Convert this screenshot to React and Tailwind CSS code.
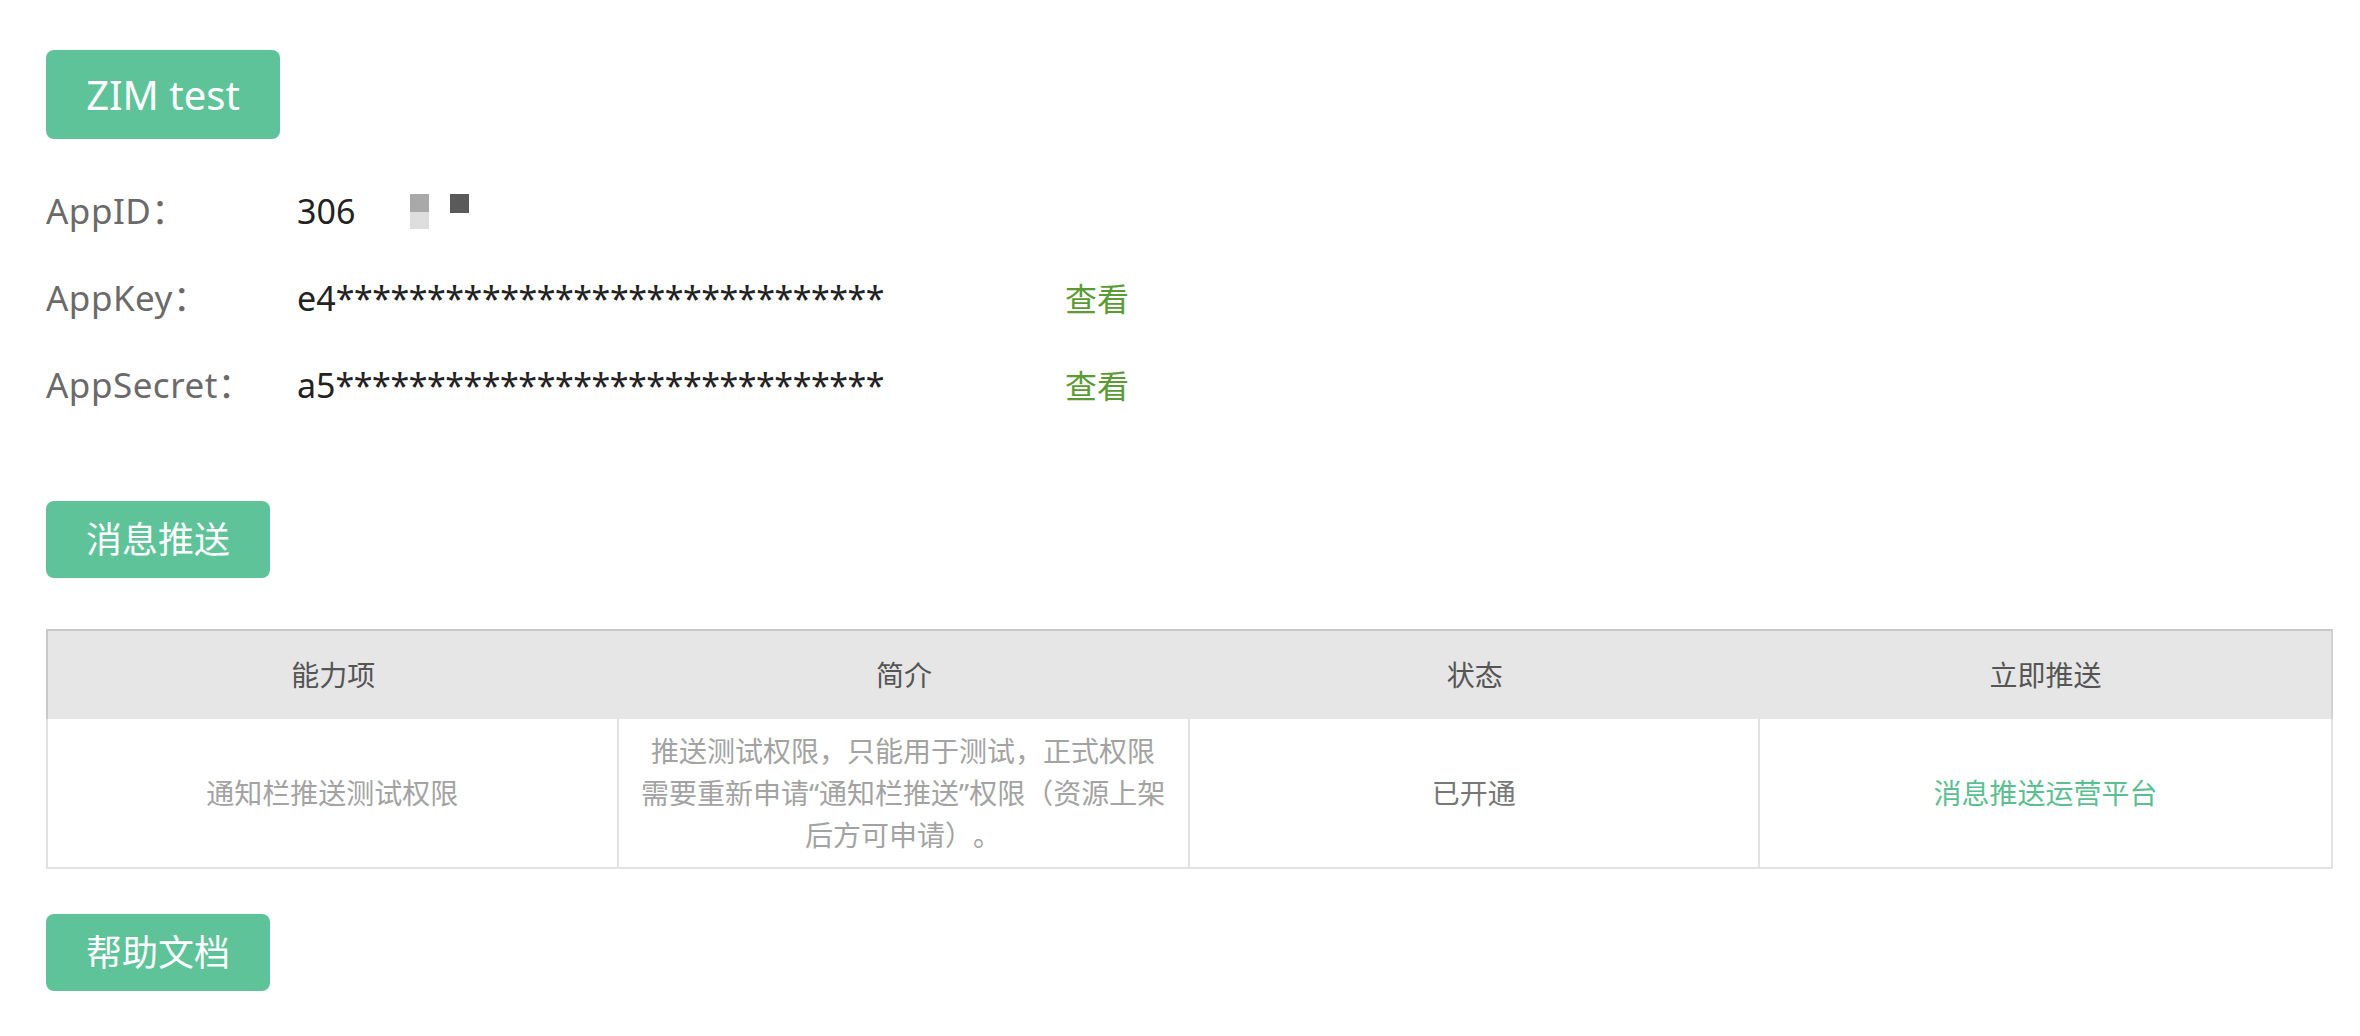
export default function App() {
  const font = "font-['Noto_Sans','Noto_Sans_CJK_SC',sans-serif]";
  const stars = "*".repeat(30);
  return (
    <div className={`min-h-screen bg-white pl-[46px] pr-[27px] pt-[50px] pb-[40px] ${font}`}>
      <div className="flex h-[89px] w-[234px] items-center justify-center rounded-[8px] bg-[#5ec399] text-[40px] text-white">
        ZIM test
      </div>

      <div className="mt-[29px] flex flex-col">
        <div className="flex h-[87px] items-center">
          <div className="w-[251px] text-[35px] tracking-[0.5px] text-[#6a6a6a]">AppID：</div>
          <div className="flex items-center text-[34px] text-[#222222]">
            <span>306</span>
            <span className="ml-[55px] flex flex-col">
              <span className="h-[18px] w-[19px] bg-[#a9a9a9]" />
              <span className="h-[17px] w-[19px] bg-[#dedede]" />
            </span>
            <span className="ml-[21px] mb-[16px] h-[19px] w-[19px] bg-[#5a5a5a]" />
          </div>
        </div>
        <div className="flex h-[87px] items-center">
          <div className="w-[251px] text-[35px] tracking-[0.5px] text-[#6a6a6a]">AppKey：</div>
          <div className="w-[768px] text-[34px] text-[#222222]">
            e4<span className="tracking-[-0.45px]">{stars}</span>
          </div>
          <div className="cursor-pointer text-[32px] text-[#5b9b35]">查看</div>
        </div>
        <div className="flex h-[87px] items-center">
          <div className="w-[251px] text-[35px] tracking-[0.5px] text-[#6a6a6a]">AppSecret：</div>
          <div className="w-[768px] text-[34px] text-[#222222]">
            a5<span className="tracking-[-0.45px]">{stars}</span>
          </div>
          <div className="cursor-pointer text-[32px] text-[#5b9b35]">查看</div>
        </div>
      </div>

      <div className="mt-[72px] flex h-[77px] w-[224px] items-center justify-center rounded-[8px] bg-[#5ec399] text-[36px] text-white">
        消息推送
      </div>

      <div className="mt-[51px] [text-spacing-trim:space-all]">
        <div className="grid h-[90px] grid-cols-4 items-center border-l-2 border-r-2 border-t-2 border-l-[#c9c9c9] border-r-[#d2d2d2] border-t-[#c9c9c9] bg-[#e6e6e6] text-center text-[28px] text-[#555555]">
          <div>能力项</div>
          <div>简介</div>
          <div>状态</div>
          <div>立即推送</div>
        </div>
        <div className="grid h-[150px] grid-cols-4 border-b-2 border-l-2 border-r-2 border-[#e2e2e2] text-center text-[28px]">
          <div className="flex items-center justify-center border-r-2 border-[#e2e2e2] text-[#a3a3a3]">
            通知栏推送测试权限
          </div>
          <div className="flex items-center justify-center border-r-2 border-[#e2e2e2] px-[10px] leading-[42px] text-[#a3a3a3]">
            <div>
              推送测试权限，只能用于测试，正式权限
              <br />
              需要重新申请“通知栏推送”权限（资源上架
              <br />
              后方可申请）。
            </div>
          </div>
          <div className="flex items-center justify-center border-r-2 border-[#e2e2e2] text-[#777777]">
            已开通
          </div>
          <div className="flex items-center justify-center text-[#5cbf91]">
            消息推送运营平台
          </div>
        </div>
      </div>

      <div className="mt-[45px] flex h-[77px] w-[224px] items-center justify-center rounded-[8px] bg-[#5ec399] text-[36px] text-white">
        帮助文档
      </div>
    </div>
  );
}
